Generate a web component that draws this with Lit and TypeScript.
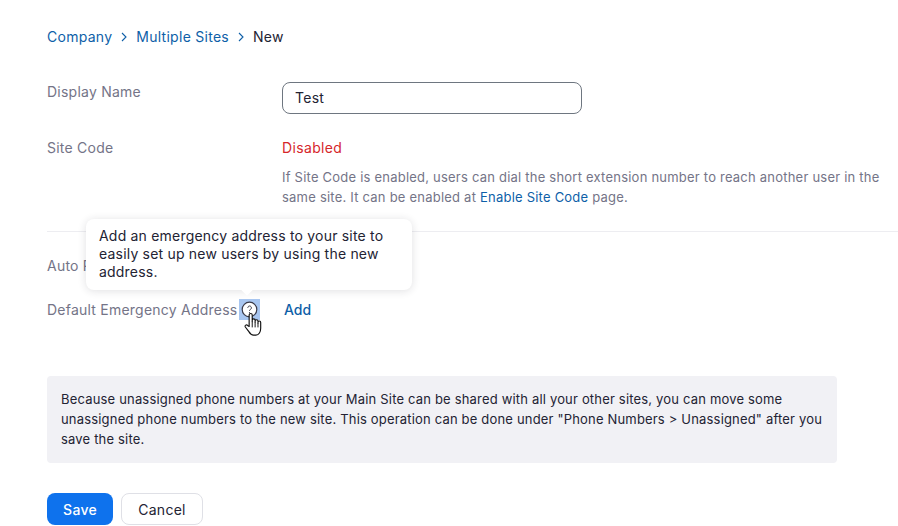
import { LitElement, html, css } from "lit";
import { customElement } from "lit/decorators.js";

@customElement("app-root")
export class AppRoot extends LitElement {
  static styles = css`
    :host { display: block; width: 898px; height: 526px; overflow: hidden; background: #fff; font-family: Inter, "Liberation Sans", sans-serif; font-size: 14px; letter-spacing: .27px; color: #232333; box-sizing: border-box; position: relative; }
    .page { padding: 27px 0 0 47px; display: flex; flex-direction: column; }
    .crumbs { display: flex; align-items: center; height: 20px; line-height: 20px; font-size: 14px; }
    .crumbs a, .link { color: #0e5fa8; text-decoration: none; }
    .crumbs svg { margin: 0 9px 0 9px; width: 6px; height: 10px; }
    .row { display: grid; grid-template-columns: 235px 1fr; }
    .label { color: #747487; font-size: 14px; letter-spacing: .23px; line-height: 20px; }
    .r1 { margin-top: 35px; height: 32px; }
    .input { width: 300px; height: 32px; box-sizing: border-box; border: 1px solid #6e7680; border-radius: 8px; padding: 0 12px; line-height: 30px; font-size: 14px; color: #232333; }
    .r2 { margin-top: 24px; }
    .disabled { color: #d6262b; line-height: 20px; letter-spacing: .35px; }
    .help { color: #747487; font-size: 13px; letter-spacing: .22px; line-height: 20px; margin-top: 9px; width: 605px; }
    .divider { height: 1px; background: #ededf1; margin-top: 24px; }
    .r3 { margin-top: 24px; }
    .r4 { margin-top: 24px; position: relative; }
    .q { position: absolute; left: 192px; top: -1px; width: 21px; height: 21px; background: #a8c6f0; display: flex; align-items: center; justify-content: center; }
    .add { padding-left: 2px; line-height: 20px; font-weight: 500; letter-spacing: 0; }
    .tip { position: absolute; left: 39px; top: -81px; width: 326px; height: 71px; box-sizing: border-box; background: #fff; border-radius: 8px; box-shadow: 0 1px 8px rgba(35,35,51,.14); padding: 8px 13px; font-size: 14px; letter-spacing: .2px; line-height: 18px; color: #232333; z-index: 2; }
    .tip::after { content: ""; position: absolute; left: 157px; bottom: -4px; width: 8px; height: 8px; background: #fff; transform: rotate(45deg); }
    .cursor { position: absolute; left: 196px; top: 12px; z-index: 3; }
    .notice { width: 790px; height: 87px; box-sizing: border-box; margin-top: 56px; padding: 13px 14px; background: #f1f1f5; border-radius: 4px; font-size: 13px; letter-spacing: .18px; line-height: 20px; color: #232333; }
    .btns { display: flex; gap: 8px; margin-top: 30px; }
    .btn { height: 32px; box-sizing: border-box; border-radius: 8px; display: flex; align-items: center; justify-content: center; font-size: 14px; }
    .save { width: 66px; background: #0e72ed; color: #fff; font-weight: 500; }
    .cancel { width: 82px; border: 1px solid #dfe0e6; color: #232333; }
  `;

  render() {
    const chev = html`<svg viewBox="0 0 6 10"><path d="M1 1 L5 5 L1 9" fill="none" stroke="#0e5fa8" stroke-width="1.1"/></svg>`;
    return html`<div class="page">
      <div class="crumbs"><a>Company</a>${chev}<a>Multiple Sites</a>${chev}<span>New</span></div>
      <div class="row r1"><div class="label">Display Name</div><div class="input">Test</div></div>
      <div class="row r2"><div class="label">Site Code</div><div>
        <div class="disabled">Disabled</div>
        <div class="help">If Site Code is enabled, users can dial the short extension number to reach another user in the same site. It can be enabled at <a class="link">Enable Site Code</a> page.</div>
      </div></div>
      <div class="divider"></div>
      <div class="row r3"><div class="label">Auto Receptionist</div><div></div></div>
      <div class="row r4">
        <div class="label">Default Emergency Address</div>
        <div class="link add">Add</div>
        <div class="q"><svg width="17" height="17" viewBox="0 0 17 17"><circle cx="8.5" cy="8.5" r="7.3" fill="#fff" stroke="#3a3a48" stroke-width="1.2"/><path d="M6.8 6.8a1.8 1.8 0 1 1 2.8 1.5c-.7.4-1.1.7-1.1 1.5" fill="none" stroke="#3a3a48" stroke-width="1"/><circle cx="8.5" cy="11.6" r=".6" fill="#3a3a48"/></svg></div>
        <div class="tip">Add an emergency address to your site to easily set up new users by using the new address.</div>
        <svg class="cursor" width="20" height="25" viewBox="0 0 20 26"><path d="M6 15 V3.2 a1.6 1.6 0 0 1 3.2 0 V10 V8.6 a1.5 1.5 0 0 1 3 0 V10.5 V9.6 a1.5 1.5 0 0 1 3 0 V11.5 V10.8 a1.4 1.4 0 0 1 2.8 0 V17 c0 3.5-1.8 7-5 7 H10.5 c-2.4 0-3.6-1.6-4.8-3.6 L2 15.6 c-.9-1.7 1.2-3 2.4-1.6 Z" fill="#fff" stroke="#111" stroke-width="1.2" stroke-linejoin="round"/><path d="M9.2 10v6M12.2 10.5v5.5M15.2 11.5v4.5" stroke="#111" stroke-width="1" fill="none"/></svg>
      </div>
      <div class="notice">Because unassigned phone numbers at your Main Site can be shared with all your other sites, you can move some unassigned phone numbers to the new site. This operation can be done under "Phone Numbers > Unassigned" after you save the site.</div>
      <div class="btns"><div class="btn save">Save</div><div class="btn cancel">Cancel</div></div>
    </div>`;
  }
}
